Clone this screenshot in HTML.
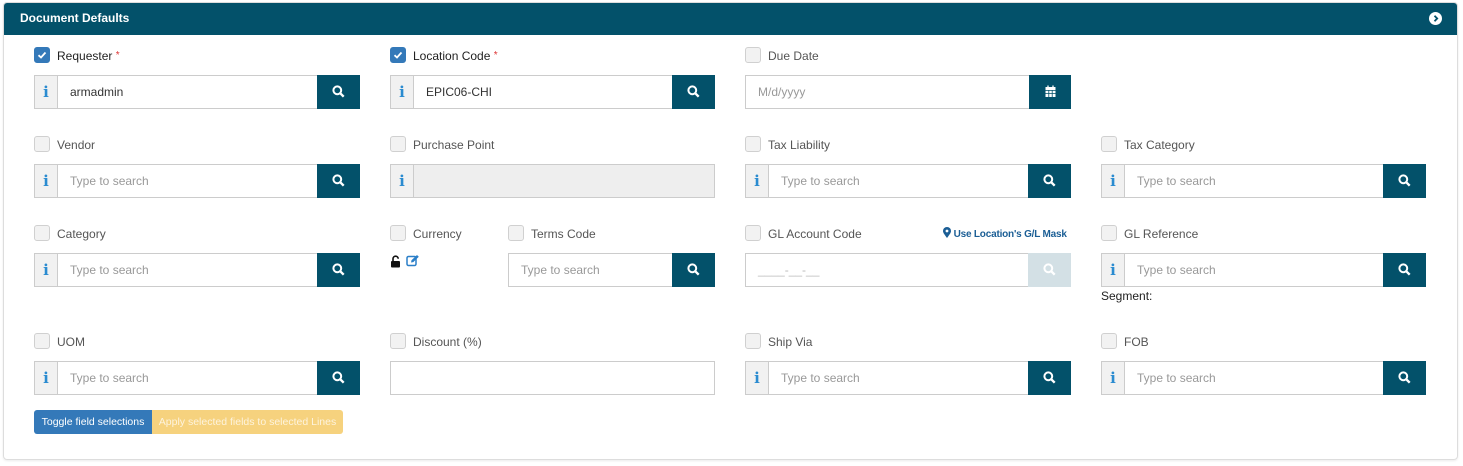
<!DOCTYPE html>
<html><head><meta charset="utf-8"><style>
*{box-sizing:border-box;margin:0;padding:0}
body{width:1463px;height:466px;background:#fff;font-family:"Liberation Sans",sans-serif;font-size:12px;color:#333;position:relative;overflow:hidden}
.panel{position:absolute;left:3px;top:2px;width:1455px;height:458px;border:1px solid #ddd;border-radius:4px;box-shadow:0 1px 2px rgba(0,0,0,.08)}
.hdr{position:absolute;left:4px;top:3px;width:1453px;height:32px;background:#03516a;border-radius:3px 3px 0 0;color:#fff;font-weight:bold;font-size:12px;line-height:31px;padding-left:16px}
.hdr .c{position:absolute;right:15px;top:9px;width:13px;height:13px}
.hdr .c svg{display:block}
.a{position:absolute}
.cb{position:absolute;width:16px;height:16px;border:1px solid #d0d0d0;border-radius:3px;background:#f2f2f2}
.cb.on{background:#3479b9;border-color:#3479b9}
.cb svg{display:block}
.lbl{position:absolute;font-size:12px;color:#555;line-height:16px}
.lbl.d{color:#222}
.req{color:#d33;font-size:10px;vertical-align:top}
.inp{position:absolute;height:34px;border:1px solid #ccc;background:#fff;font-size:12px;line-height:32px;padding-left:12px;color:#999}
.inp.v{color:#333}
.info{position:absolute;width:24px;height:34px;border:1px solid #ccc;background:#f1f1f1;color:#2a8bd0;font-weight:bold;font-family:"DejaVu Serif",serif;font-size:15px;text-align:center;line-height:32px}
.btn{position:absolute;width:43px;height:34px;background:#03516a}
.btn svg{position:absolute;left:15px;top:10px}
</style></head><body>
<div class="panel"></div>
<div class="hdr">Document Defaults<div class="c"><svg width="13" height="13" viewBox="0 0 13 13"><circle cx="6.5" cy="6.5" r="6.5" fill="#fff"/><path d="M5.5 3.8 8.2 6.5 5.5 9.2" stroke="#03516a" stroke-width="1.8" fill="none"/></svg></div></div>

<!-- Row 1 -->
<div class="cb on" style="left:34px;top:47px"><svg width="14" height="14" viewBox="0 0 14 14"><path d="M3.5 7.2 6 9.5 10.5 4.5" stroke="#fff" stroke-width="1.8" fill="none"/></svg></div>
<div class="lbl d" style="left:57px;top:48px">Requester <span class="req">*</span></div>
<div class="info" style="left:34px;top:75px">i</div>
<div class="inp v" style="left:57px;top:75px;width:261px">armadmin</div>
<div class="btn" style="left:317px;top:75px"><svg width="13" height="13" viewBox="0 0 13 13"><circle cx="5.3" cy="5.3" r="3.9" stroke="#fff" stroke-width="2" fill="none"/><path d="M8.2 8.2 11.7 11.7" stroke="#fff" stroke-width="2.4"/></svg></div>

<div class="cb on" style="left:390px;top:47px"><svg width="14" height="14" viewBox="0 0 14 14"><path d="M3.5 7.2 6 9.5 10.5 4.5" stroke="#fff" stroke-width="1.8" fill="none"/></svg></div>
<div class="lbl d" style="left:413px;top:48px">Location Code <span class="req">*</span></div>
<div class="info" style="left:390px;top:75px">i</div>
<div class="inp v" style="left:413px;top:75px;width:260px">EPIC06-CHI</div>
<div class="btn" style="left:672px;top:75px"><svg width="13" height="13" viewBox="0 0 13 13"><circle cx="5.3" cy="5.3" r="3.9" stroke="#fff" stroke-width="2" fill="none"/><path d="M8.2 8.2 11.7 11.7" stroke="#fff" stroke-width="2.4"/></svg></div>

<div class="cb" style="left:745px;top:47px"></div>
<div class="lbl" style="left:768px;top:48px">Due Date</div>
<div class="inp" style="left:745px;top:75px;width:285px">M/d/yyyy</div>
<div class="btn" style="left:1029px;top:75px;width:42px"><svg width="13" height="13" viewBox="0 0 13 13" style="left:15px;top:10px"><rect x="1.5" y="2" width="10" height="10" fill="#fff"/><path d="M4 .5v3M9 .5v3" stroke="#fff" stroke-width="1.3"/><path d="M1.5 5.5h10M1.5 8.5h10M4.8 5v7M8.2 5v7" stroke="#03516a" stroke-width=".8"/></svg></div>

<!-- Row 2 -->
<div class="cb" style="left:34px;top:136px"></div>
<div class="lbl" style="left:57px;top:137px">Vendor</div>
<div class="info" style="left:34px;top:164px">i</div>
<div class="inp" style="left:57px;top:164px;width:261px">Type to search</div>
<div class="btn" style="left:317px;top:164px"><svg width="13" height="13" viewBox="0 0 13 13"><circle cx="5.3" cy="5.3" r="3.9" stroke="#fff" stroke-width="2" fill="none"/><path d="M8.2 8.2 11.7 11.7" stroke="#fff" stroke-width="2.4"/></svg></div>

<div class="cb" style="left:390px;top:136px"></div>
<div class="lbl" style="left:413px;top:137px">Purchase Point</div>
<div class="info" style="left:390px;top:164px">i</div>
<div class="inp" style="left:413px;top:164px;width:302px;background:#eee"></div>

<div class="cb" style="left:745px;top:136px"></div>
<div class="lbl" style="left:768px;top:137px">Tax Liability</div>
<div class="info" style="left:745px;top:164px">i</div>
<div class="inp" style="left:768px;top:164px;width:261px">Type to search</div>
<div class="btn" style="left:1028px;top:164px"><svg width="13" height="13" viewBox="0 0 13 13"><circle cx="5.3" cy="5.3" r="3.9" stroke="#fff" stroke-width="2" fill="none"/><path d="M8.2 8.2 11.7 11.7" stroke="#fff" stroke-width="2.4"/></svg></div>

<div class="cb" style="left:1101px;top:136px"></div>
<div class="lbl" style="left:1124px;top:137px">Tax Category</div>
<div class="info" style="left:1101px;top:164px">i</div>
<div class="inp" style="left:1124px;top:164px;width:260px">Type to search</div>
<div class="btn" style="left:1383px;top:164px"><svg width="13" height="13" viewBox="0 0 13 13"><circle cx="5.3" cy="5.3" r="3.9" stroke="#fff" stroke-width="2" fill="none"/><path d="M8.2 8.2 11.7 11.7" stroke="#fff" stroke-width="2.4"/></svg></div>

<!-- Row 3 -->
<div class="cb" style="left:34px;top:225px"></div>
<div class="lbl" style="left:57px;top:226px">Category</div>
<div class="info" style="left:34px;top:253px">i</div>
<div class="inp" style="left:57px;top:253px;width:261px">Type to search</div>
<div class="btn" style="left:317px;top:253px"><svg width="13" height="13" viewBox="0 0 13 13"><circle cx="5.3" cy="5.3" r="3.9" stroke="#fff" stroke-width="2" fill="none"/><path d="M8.2 8.2 11.7 11.7" stroke="#fff" stroke-width="2.4"/></svg></div>

<div class="cb" style="left:390px;top:225px"></div>
<div class="lbl" style="left:413px;top:226px">Currency</div>
<svg class="a" style="left:390px;top:255px" width="12" height="13" viewBox="0 0 12 13"><path d="M3 6V3.8a2.6 2.6 0 0 1 5.2 0" stroke="#111" stroke-width="1.6" fill="none"/><rect x="1" y="6" width="9" height="6.5" rx="1" fill="#111"/></svg>
<svg class="a" style="left:406px;top:254px" width="14" height="13" viewBox="0 0 14 13"><rect x="1" y="2.5" width="9" height="9" rx="1.5" stroke="#2a7fc8" stroke-width="1.5" fill="none"/><path d="M5 8.5l.5-2.2L11 1l1.8 1.8-5.5 5.3z" fill="#2a7fc8"/></svg>

<div class="cb" style="left:508px;top:225px"></div>
<div class="lbl" style="left:531px;top:226px">Terms Code</div>
<div class="inp" style="left:508px;top:253px;width:165px">Type to search</div>
<div class="btn" style="left:672px;top:253px"><svg width="13" height="13" viewBox="0 0 13 13"><circle cx="5.3" cy="5.3" r="3.9" stroke="#fff" stroke-width="2" fill="none"/><path d="M8.2 8.2 11.7 11.7" stroke="#fff" stroke-width="2.4"/></svg></div>

<div class="cb" style="left:745px;top:225px"></div>
<div class="lbl" style="left:768px;top:226px">GL Account Code</div>
<div class="a" style="left:943px;top:227px;font-size:10px;font-weight:bold;color:#1b5e95;letter-spacing:-0.2px"><svg width="8" height="11" viewBox="0 0 8 11" style="vertical-align:-1px"><path d="M4 11C1 7 0 5.5 0 4a4 4 0 0 1 8 0c0 1.5-1 3-4 7z" fill="#1b5e95"/><circle cx="4" cy="4" r="1.4" fill="#fff"/></svg> Use Location's G/L Mask</div>
<div class="inp" style="left:745px;top:253px;width:284px;color:#bbb">____-__-__</div>
<div class="btn" style="left:1028px;top:253px;background:#d3e0e5"><svg width="13" height="13" viewBox="0 0 13 13"><circle cx="5.3" cy="5.3" r="3.9" stroke="#fff" stroke-width="2" fill="none"/><path d="M8.2 8.2 11.7 11.7" stroke="#fff" stroke-width="2.4"/></svg></div>

<div class="cb" style="left:1101px;top:225px"></div>
<div class="lbl" style="left:1124px;top:226px">GL Reference</div>
<div class="info" style="left:1101px;top:253px">i</div>
<div class="inp" style="left:1124px;top:253px;width:260px">Type to search</div>
<div class="btn" style="left:1383px;top:253px"><svg width="13" height="13" viewBox="0 0 13 13"><circle cx="5.3" cy="5.3" r="3.9" stroke="#fff" stroke-width="2" fill="none"/><path d="M8.2 8.2 11.7 11.7" stroke="#fff" stroke-width="2.4"/></svg></div>
<div class="lbl d" style="left:1101px;top:288px;font-size:12px">Segment:</div>

<!-- Row 4 -->
<div class="cb" style="left:34px;top:333px"></div>
<div class="lbl" style="left:57px;top:334px">UOM</div>
<div class="info" style="left:34px;top:361px">i</div>
<div class="inp" style="left:57px;top:361px;width:261px">Type to search</div>
<div class="btn" style="left:317px;top:361px"><svg width="13" height="13" viewBox="0 0 13 13"><circle cx="5.3" cy="5.3" r="3.9" stroke="#fff" stroke-width="2" fill="none"/><path d="M8.2 8.2 11.7 11.7" stroke="#fff" stroke-width="2.4"/></svg></div>

<div class="cb" style="left:390px;top:333px"></div>
<div class="lbl" style="left:413px;top:334px">Discount (%)</div>
<div class="inp" style="left:390px;top:361px;width:325px"></div>

<div class="cb" style="left:745px;top:333px"></div>
<div class="lbl" style="left:768px;top:334px">Ship Via</div>
<div class="info" style="left:745px;top:361px">i</div>
<div class="inp" style="left:768px;top:361px;width:261px">Type to search</div>
<div class="btn" style="left:1028px;top:361px"><svg width="13" height="13" viewBox="0 0 13 13"><circle cx="5.3" cy="5.3" r="3.9" stroke="#fff" stroke-width="2" fill="none"/><path d="M8.2 8.2 11.7 11.7" stroke="#fff" stroke-width="2.4"/></svg></div>

<div class="cb" style="left:1101px;top:333px"></div>
<div class="lbl" style="left:1124px;top:334px">FOB</div>
<div class="info" style="left:1101px;top:361px">i</div>
<div class="inp" style="left:1124px;top:361px;width:260px">Type to search</div>
<div class="btn" style="left:1383px;top:361px"><svg width="13" height="13" viewBox="0 0 13 13"><circle cx="5.3" cy="5.3" r="3.9" stroke="#fff" stroke-width="2" fill="none"/><path d="M8.2 8.2 11.7 11.7" stroke="#fff" stroke-width="2.4"/></svg></div>

<!-- Buttons -->
<div class="a" style="left:34px;top:410px;width:118px;height:24px;background:#3479b9;color:#fff;font-size:10.5px;line-height:24px;text-align:center;border-radius:3px 0 0 3px">Toggle field selections</div>
<div class="a" style="left:152px;top:410px;width:191px;height:24px;background:#f6d27e;color:#fdf3dd;font-size:10.5px;line-height:24px;text-align:center;border-radius:0 3px 3px 0">Apply selected fields to selected Lines</div>
</body></html>
